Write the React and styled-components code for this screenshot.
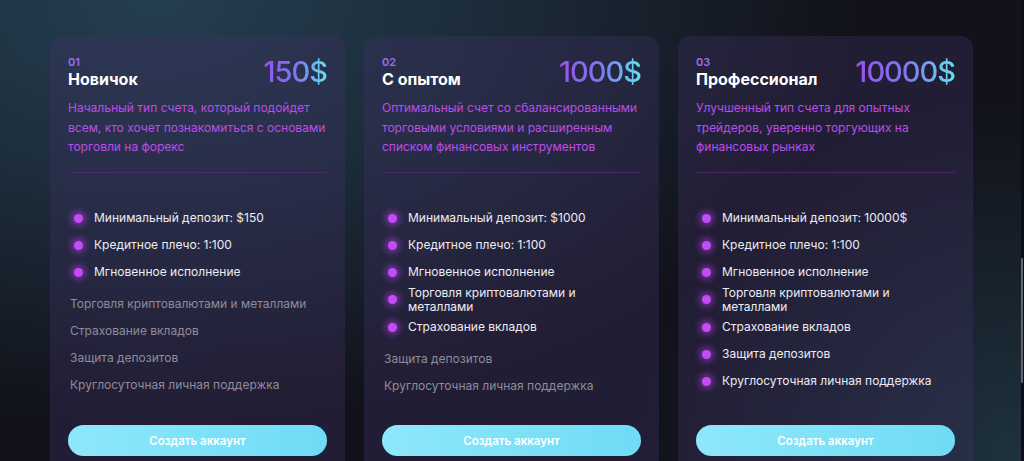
import React from 'react'
import styled, { createGlobalStyle } from 'styled-components'

const GlobalStyle = createGlobalStyle`
  html, body {
    margin: 0;
    padding: 0;
    height: 100%;
    overflow: hidden;
    background: #11121a;
  }
  * {
    box-sizing: border-box;
  }
`

const Page = styled('div')`
  display: flex;
  width: 1024px;
  height: 461px;
  overflow: hidden;
  font-family: Inter, "Noto Sans", sans-serif;
  background:
    radial-gradient(ellipse 700px 420px at 15% 0%, rgba(36, 62, 80, 1) 0%, rgba(36, 62, 80, 0.6) 45%, rgba(36, 62, 80, 0) 100%),
    radial-gradient(ellipse 380px 360px at 100% 100%, rgba(30, 50, 62, 1) 0%, rgba(30, 50, 62, 0) 100%),
    #11121a;
`

const Main = styled('main')`
  flex: 1;
  display: flex;
  justify-content: center;
  gap: 19px;
  padding: 36px 0 0 2px;
`

const ScrollRail = styled('div')`
  width: 3px;
  background: #0d0e13;
  padding-top: 258px;
`

const ScrollThumb = styled('div')`
  width: 2px;
  height: 125px;
  border-radius: 1px;
  background: #65666c;
`

const Card = styled('section')`
  display: flex;
  flex-direction: column;
  width: 295px;
  height: 440px;
  flex-shrink: 0;
  padding: 20px 18px 20px;
  border-radius: 12px;
  background: rgba(62, 48, 98, 0.37);
`

const Head = styled('header')`
  display: flex;
  justify-content: space-between;
  align-items: flex-start;
`

const Num = styled('div')`
  font-size: 11px;
  line-height: 12px;
  font-weight: 600;
  color: #9c6cf2;
`

const Title = styled('h2')`
  margin: 0;
  font-size: 16px;
  line-height: 22px;
  font-weight: 700;
  color: #ffffff;
`

const Price = styled('div')`
  margin-top: 0;
  font-size: 29px;
  line-height: 31px;
  font-weight: 500;
  letter-spacing: -1px;
  background: linear-gradient(90deg, #9a50ef 0%, #7c7cf0 55%, #5fe4ef 100%);
  -webkit-background-clip: text;
  background-clip: text;
  color: transparent;
`

const Desc = styled('p')`
  margin: 8px 0 0;
  font-size: 12px;
  line-height: 19.5px;
  white-space: nowrap;
  color: #bd4de8;
`

const Divider = styled('hr')`
  margin: 15px 0 0;
  border: 0;
  height: 1px;
  background: #4a286c;
`

const List = styled('ul')`
  list-style: none;
  margin: 32px 0 0;
  padding: 0;
`

const Item = styled('li')`
  display: flex;
  align-items: center;
  min-height: 27px;
  margin-top: ${p => (p.$gap ? '5px' : '0')};
  padding-left: ${p => (p.$on ? '6px' : '2px')};
  font-size: 12px;
  line-height: 14px;
  color: ${p => (p.$on ? '#ececf3' : '#8d8c9b')};
`

const Dot = styled('span')`
  flex-shrink: 0;
  width: 9px;
  height: 9px;
  margin-right: 11px;
  border-radius: 50%;
  background: #c24cf5;
  box-shadow: 0 0 6px 3px rgba(190, 60, 240, 0.5);
`

const ItemText = styled('span')`
  max-width: ${p => (p.$on ? '225px' : 'none')};
`

const Button = styled('button')`
  margin-top: auto;
  height: 31px;
  border: 0;
  border-radius: 16px;
  background: linear-gradient(90deg, #8fe7fa 0%, #7ee2f8 50%, #70dbf5 100%);
  color: #ffffff;
  font-family: inherit;
  font-size: 11.5px;
  font-weight: 600;
  cursor: pointer;
`

const features = [
  'Минимальный депозит: ',
  'Кредитное плечо: 1:100',
  'Мгновенное исполнение',
  'Торговля криптовалютами и металлами',
  'Страхование вкладов',
  'Защита депозитов',
  'Круглосуточная личная поддержка',
]

const plans = [
  {
    num: '01',
    title: 'Новичок',
    price: '150$',
    deposit: '$150',
    on: 3,
    desc: ['Начальный тип счета, который подойдет', 'всем, кто хочет познакомиться с основами', 'торговли на форекс'],
  },
  {
    num: '02',
    title: 'С опытом',
    price: '1000$',
    deposit: '$1000',
    on: 5,
    desc: ['Оптимальный счет со сбалансированными', 'торговыми условиями и расширенным', 'списком финансовых инструментов'],
  },
  {
    num: '03',
    title: 'Профессионал',
    price: '10000$',
    deposit: '10000$',
    on: 7,
    desc: ['Улучшенный тип счета для опытных', 'трейдеров, уверенно торгующих на', 'финансовых рынках'],
  },
]

const App = () => (
  <Page>
    <GlobalStyle />
    <Main>
      {plans.map(plan => (
        <Card key={plan.num}>
          <Head>
            <div>
              <Num>{plan.num}</Num>
              <Title>{plan.title}</Title>
            </div>
            <Price>{plan.price}</Price>
          </Head>
          <Desc>
            {plan.desc.map((line, i) => (
              <React.Fragment key={i}>
                {i > 0 && <br />}
                {line}
              </React.Fragment>
            ))}
          </Desc>
          <Divider />
          <List>
            {features.map((f, i) => {
              const on = i < plan.on
              return (
                <Item key={f} $on={on} $gap={i === plan.on}>
                  {on && <Dot />}
                  <ItemText $on={on}>{i === 0 ? f + plan.deposit : f}</ItemText>
                </Item>
              )
            })}
          </List>
          <Button>Создать аккаунт</Button>
        </Card>
      ))}
    </Main>
    <ScrollRail>
      <ScrollThumb />
    </ScrollRail>
  </Page>
)

export default App
